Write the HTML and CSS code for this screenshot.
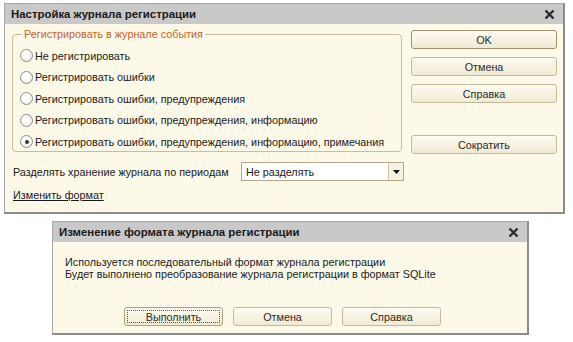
FILE: index.html
```html
<!DOCTYPE html>
<html lang="ru">
<head>
    <meta charset="UTF-8">
    <title>Настройка журнала регистрации</title>
    <link rel="stylesheet" href="styles.css">
</head>
<body>

    <div class="dialog main">
        <div class="titlebar">
            <span class="title">Настройка журнала регистрации</span>
            <svg class="close" width="11" height="11" viewBox="0 0 11 11"><path d="M1.5 1.5 L9.5 9.5 M9.5 1.5 L1.5 9.5" stroke="#2b2b2b" stroke-width="2.4"/></svg>
        </div>
        <div class="content">
            <div class="left">
                <fieldset class="group">
                    <legend>Регистрировать в журнале события</legend>
                    <div class="radio"><span class="circle"></span>Не регистрировать</div>
                    <div class="radio"><span class="circle"></span>Регистрировать ошибки</div>
                    <div class="radio"><span class="circle"></span>Регистрировать ошибки, предупреждения</div>
                    <div class="radio"><span class="circle"></span>Регистрировать ошибки, предупреждения, информацию</div>
                    <div class="radio"><span class="circle checked"></span>Регистрировать ошибки, предупреждения, информацию, примечания</div>
                </fieldset>
                <div class="period">
                    <span>Разделять хранение журнала по периодам</span>
                    <div class="select">
                        <span class="value">Не разделять</span>
                        <span class="arrow"><svg width="7" height="4" viewBox="0 0 7 4"><path d="M0 0 H7 L3.5 4 Z" fill="#111"/></svg></span>
                    </div>
                </div>
                <a class="link" href="#">Изменить формат</a>
            </div>
            <div class="buttons">
                <button class="btn default">OK</button>
                <button class="btn">Отмена</button>
                <button class="btn">Справка</button>
                <button class="btn shorten">Сократить</button>
            </div>
        </div>
    </div>

    <div class="dialog second">
        <div class="titlebar">
            <span class="title">Изменение формата журнала регистрации</span>
            <svg class="close" width="11" height="11" viewBox="0 0 11 11"><path d="M1.5 1.5 L9.5 9.5 M9.5 1.5 L1.5 9.5" stroke="#2b2b2b" stroke-width="2.4"/></svg>
        </div>
        <div class="message">
            <p>Используется последовательный формат журнала регистрации</p>
            <p>Будет выполнено преобразование журнала регистрации в формат SQLite</p>
        </div>
        <div class="actions">
            <button class="btn focused">Выполнить</button>
            <button class="btn">Отмена</button>
            <button class="btn">Справка</button>
        </div>
    </div>

</body>
</html>
```

FILE: styles.css
```css
body {
    margin: 0;
    background-color: #ffffff;
    font-family: "Liberation Sans", Arial, sans-serif;
    font-size: 10.8px;
    color: #1a1a1a;
}
.dialog {
    background-color: #fdf9e8;
    border: 1px solid #a8a8a8;
    border-right: 2px solid #8c8c8c;
    border-bottom: 2px solid #8c8c8c;
    box-sizing: border-box;
}
.main {
    width: 561px;
    height: 211px;
    margin: 3px 0 0 4px;
}
.second {
    width: 477px;
    height: 114px;
    margin: 7px 0 0 52px;
}
.titlebar {
    height: 20px;
    background-color: #c9c9c9;
    display: flex;
    align-items: center;
    justify-content: space-between;
    padding: 0 8px 0 6px;
}
.title {
    font-weight: bold;
    font-size: 11.4px;
    color: #1a1a1a;
}
.close {
    display: block;
}
.content {
    display: flex;
    padding: 4px 6px 0 7px;
}
.left {
    width: 391px;
}
.group {
    margin: 0;
    padding: 4px 0 0 7px;
    border: 1px solid #cbbd9c;
    border-radius: 4px;
    height: 124px;
    box-sizing: border-box;
}
.group legend {
    color: #c8641c;
    padding: 0 2px;
    margin-left: 2px;
    line-height: 13px;
}
.radio {
    display: flex;
    align-items: center;
    height: 21.5px;
    white-space: nowrap;
}
.circle {
    width: 11px;
    height: 11px;
    border: 1px solid #8d8d8d;
    border-radius: 50%;
    background: radial-gradient(circle at 40% 35%, #ffffff 30%, #e6e2d4);
    margin-right: 2px;
    position: relative;
}
.circle.checked::after {
    content: "";
    position: absolute;
    left: 3.5px;
    top: 3.5px;
    width: 4px;
    height: 4px;
    border-radius: 50%;
    background-color: #333;
}
.period {
    display: flex;
    align-items: center;
    justify-content: space-between;
    margin-top: 10px;
    padding-left: 1px;
}
.select {
    width: 163px;
    height: 19px;
    box-sizing: border-box;
    border: 1px solid #b3a787;
    background-color: #ffffff;
    display: flex;
    align-items: center;
    margin-right: -2px;
}
.select .value {
    flex: 1;
    padding-left: 4px;
}
.select .arrow {
    width: 14px;
    height: 17px;
    border-left: 1px solid #cfc5ad;
    display: flex;
    align-items: center;
    justify-content: center;
    background-color: #f7f3e4;
}
.select .arrow svg {
    display: block;
}
.link {
    display: inline-block;
    margin-top: 8px;
    margin-left: 1px;
    color: #1a1a1a;
    text-decoration: underline;
}
.buttons {
    display: flex;
    flex-direction: column;
    gap: 8px;
    margin-left: 9px;
    padding-top: 2px;
}
.btn {
    width: 146px;
    height: 19px;
    padding: 0;
    font-family: "Liberation Sans", Arial, sans-serif;
    font-size: 10.8px;
    color: #2a2a2a;
    border: 1px solid #c6b995;
    border-radius: 3px;
    background: linear-gradient(#fdfbf1, #f1ead3);
}
.btn.default {
    border-color: #9e916c;
}
.btn.shorten {
    margin-top: 24px;
}
.message {
    padding: 14px 0 0 12px;
    height: 51px;
}
.message p {
    margin: 0;
    line-height: 12px;
}
.actions {
    display: flex;
    gap: 10px;
    padding-left: 71px;
}
.actions .btn {
    width: 99px;
}
.btn.focused {
    outline: 1px dotted #555;
    outline-offset: -4px;
    border-color: #b0a27a;
}
```
